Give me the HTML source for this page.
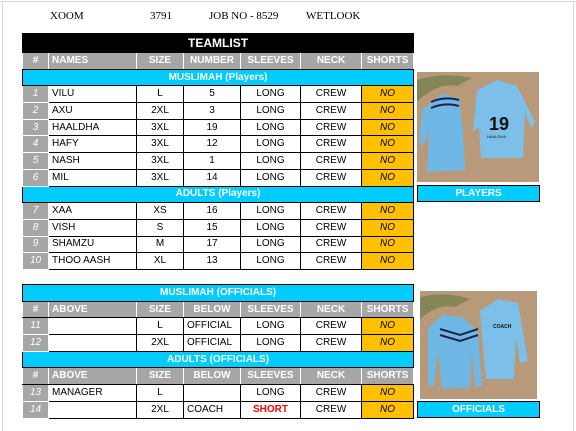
<!DOCTYPE html>
<html><head><meta charset="utf-8"><style>
*{margin:0;padding:0;box-sizing:border-box}
body{width:576px;height:431px;background:#fff;position:relative;overflow:hidden;font-family:"Liberation Sans",sans-serif}
.fr1{position:absolute;left:0;top:1px;width:576px;height:1px;background:#d4d8e0}
.fr2{position:absolute;left:2px;top:1px;width:1px;height:430px;background:#d4d8e0}
.fr3{position:absolute;left:573px;top:1px;width:1px;height:430px;background:#d4d8e0}
.top{position:absolute;top:10px;font-family:"Liberation Serif",serif;font-size:11px;color:#000}
table{position:absolute;left:22px;border-collapse:collapse;table-layout:fixed;font-size:10px}
td{border:1px solid #000;height:16.7px;text-align:center;white-space:nowrap;overflow:hidden;padding:0;line-height:14px}
.t{background:#000;color:#fff;font-weight:bold;font-size:12px;height:19px}
.h td{background:#a6a6a6;color:#fff;font-weight:bold;border-color:#fff #fff #000 #fff}
.h td.l{text-align:left;padding-left:3px}
.c td{background:#00ccff;color:#fff;font-weight:bold}
.n{background:#a6a6a6;color:#fff;font-style:italic;border-color:#fff}
.l{text-align:left;padding-left:3px}
.o{background:#ffc000;font-style:italic}
.lbl{position:absolute;left:417px;width:123px;height:17px;background:#00ccff;border:1px solid #000;color:#fff;font-weight:bold;font-size:10px;text-align:center;line-height:15px}
</style></head><body>
<div class="fr1"></div><div class="fr2"></div><div class="fr3"></div>
<div class="top" style="left:50px">XOOM</div>
<div class="top" style="left:150px">3791</div>
<div class="top" style="left:209px">JOB NO - 8529</div>
<div class="top" style="left:306px">WETLOOK</div>

<table style="top:33px;width:391px">
<colgroup><col style="width:26px"><col style="width:88px"><col style="width:47px"><col style="width:57px"><col style="width:60px"><col style="width:61px"><col style="width:52px"></colgroup>
<tr><td colspan="7" class="t">TEAMLIST</td></tr>
<tr class="h"><td>#</td><td class="l">NAMES</td><td>SIZE</td><td>NUMBER</td><td>SLEEVES</td><td>NECK</td><td>SHORTS</td></tr>
<tr class="c"><td colspan="7">MUSLIMAH (Players)</td></tr>
<tr><td class="n">1</td><td class="l">VILU</td><td>L</td><td>5</td><td>LONG</td><td>CREW</td><td class="o">NO</td></tr>
<tr><td class="n">2</td><td class="l">AXU</td><td>2XL</td><td>3</td><td>LONG</td><td>CREW</td><td class="o">NO</td></tr>
<tr><td class="n">3</td><td class="l">HAALDHA</td><td>3XL</td><td>19</td><td>LONG</td><td>CREW</td><td class="o">NO</td></tr>
<tr><td class="n">4</td><td class="l">HAFY</td><td>3XL</td><td>12</td><td>LONG</td><td>CREW</td><td class="o">NO</td></tr>
<tr><td class="n">5</td><td class="l">NASH</td><td>3XL</td><td>1</td><td>LONG</td><td>CREW</td><td class="o">NO</td></tr>
<tr><td class="n">6</td><td class="l">MIL</td><td>3XL</td><td>14</td><td>LONG</td><td>CREW</td><td class="o">NO</td></tr>
<tr class="c"><td colspan="7">ADULTS (Players)</td></tr>
<tr><td class="n">7</td><td class="l">XAA</td><td>XS</td><td>16</td><td>LONG</td><td>CREW</td><td class="o">NO</td></tr>
<tr><td class="n">8</td><td class="l">VISH</td><td>S</td><td>15</td><td>LONG</td><td>CREW</td><td class="o">NO</td></tr>
<tr><td class="n">9</td><td class="l">SHAMZU</td><td>M</td><td>17</td><td>LONG</td><td>CREW</td><td class="o">NO</td></tr>
<tr><td class="n">10</td><td class="l">THOO AASH</td><td>XL</td><td>13</td><td>LONG</td><td>CREW</td><td class="o">NO</td></tr>
</table>

<table style="top:284px;width:391px">
<colgroup><col style="width:26px"><col style="width:88px"><col style="width:47px"><col style="width:57px"><col style="width:60px"><col style="width:61px"><col style="width:52px"></colgroup>
<tr class="c"><td colspan="7">MUSLIMAH (OFFICIALS)</td></tr>
<tr class="h"><td>#</td><td class="l">ABOVE</td><td>SIZE</td><td>BELOW</td><td>SLEEVES</td><td>NECK</td><td>SHORTS</td></tr>
<tr><td class="n">11</td><td></td><td>L</td><td class="l">OFFICIAL</td><td>LONG</td><td>CREW</td><td class="o">NO</td></tr>
<tr><td class="n">12</td><td></td><td>2XL</td><td class="l">OFFICIAL</td><td>LONG</td><td>CREW</td><td class="o">NO</td></tr>
<tr class="c"><td colspan="7">ADULTS (OFFICIALS)</td></tr>
<tr class="h"><td>#</td><td class="l">ABOVE</td><td>SIZE</td><td>BELOW</td><td>SLEEVES</td><td>NECK</td><td>SHORTS</td></tr>
<tr><td class="n">13</td><td class="l">MANAGER</td><td>L</td><td></td><td>LONG</td><td>CREW</td><td class="o">NO</td></tr>
<tr><td class="n">14</td><td></td><td>2XL</td><td class="l">COACH</td><td style="color:#ff0000;font-weight:bold">SHORT</td><td>CREW</td><td class="o">NO</td></tr>
</table>

<svg style="position:absolute;left:417px;top:72px" width="122" height="110" viewBox="0 0 122 110">
<rect width="122" height="110" fill="#b89a7a"/>
<path d="M0 8 Q25 0 55 6 L40 14 Q20 10 0 30Z" fill="#6f7d4a" opacity=".7"/>
<path d="M5 38 L25 22 L42 26 L46 60 L48 98 L10 100 L12 60 L5 75 L2 70Z" fill="#6fb8e6"/>
<path d="M60 18 L80 8 L100 14 L118 50 L114 56 L108 40 L106 86 L64 86 L62 55 L56 60Z" fill="#7cc0ea"/>
<path d="M14 30 Q28 24 42 28 M14 36 Q28 30 42 34" stroke="#224" stroke-width="2" fill="none"/>
<text x="72" y="58" font-family="Liberation Sans" font-weight="bold" font-size="18" fill="#111">19</text>
<text x="70" y="66" font-family="Liberation Sans" font-size="4" fill="#111">HAALDHA</text>
</svg>
<div class="lbl" style="top:185px">PLAYERS</div>

<svg style="position:absolute;left:420px;top:291px" width="117" height="108" viewBox="0 0 117 108">
<rect width="117" height="108" fill="#b89a7a"/>
<path d="M0 6 Q25 0 50 8 L35 16 Q18 12 0 28Z" fill="#6f7d4a" opacity=".7"/>
<path d="M60 20 L78 8 L98 12 L108 70 L100 72 L96 45 L94 88 L66 88 L62 45Z" fill="#7cc0ea"/>
<path d="M8 38 L22 24 L42 26 L58 40 L62 95 L55 96 L52 60 L50 96 L22 98 L18 60 L14 95 L8 94Z" fill="#6fb8e6"/>
<path d="M20 38 L40 44 L58 38 M20 44 L40 50 L58 44" stroke="#224" stroke-width="2" fill="none"/>
<text x="73" y="37" font-family="Liberation Sans" font-weight="bold" font-size="5" fill="#111">COACH</text>
</svg>
<div class="lbl" style="top:401px">OFFICIALS</div>
</body></html>
